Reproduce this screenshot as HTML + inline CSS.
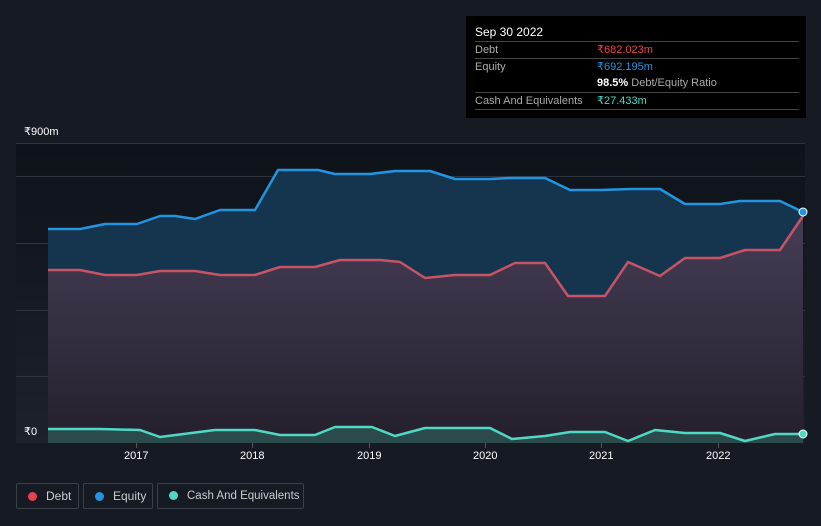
<!DOCTYPE html><html><head><style>
html,body{margin:0;width:821px;height:526px;overflow:hidden}
body{background:#151a23;font-family:"Liberation Sans",sans-serif;position:relative}
.tt{position:absolute;left:466px;top:16px;width:340px;height:102px;background:#000;color:#fff;font-size:11px}
.tt .h{position:absolute;left:9px;top:9px;font-size:12px}
.row{position:absolute;left:9px;width:324px;border-top:1px solid #444;height:17px;line-height:17px;color:#aaa}
.row span{position:absolute;left:122px}
.leg{position:absolute;top:483px;height:26px;border:1px solid #3a3f48;border-radius:2px;color:#ccc;font-size:12px;line-height:24px;box-sizing:border-box;white-space:nowrap}
.leg i{display:inline-block;width:9px;height:9px;border-radius:50%;margin:0 9px 0 11px;vertical-align:-1px}
.ax{position:absolute;color:#fff;font-size:11px}
</style></head><body>
<svg width="821" height="526" style="position:absolute;left:0;top:0">
<defs><linearGradient id="pg" x1="0" y1="0" x2="0" y2="1"><stop offset="0" stop-color="#0e1219"/><stop offset="1" stop-color="#1c212b"/></linearGradient>
<linearGradient id="dg" x1="0" y1="0" x2="0" y2="1"><stop offset="0" stop-color="#463d55"/><stop offset="1" stop-color="#241f2c"/></linearGradient></defs>
<rect x="16" y="143" width="789" height="300" fill="url(#pg)"/>
<g stroke="#2e333d" stroke-width="1"><line x1="16" y1="143.5" x2="805" y2="143.5"/><line x1="16" y1="176.5" x2="805" y2="176.5"/><line x1="16" y1="243.5" x2="805" y2="243.5"/><line x1="16" y1="310.5" x2="805" y2="310.5"/><line x1="16" y1="376.5" x2="805" y2="376.5"/></g>
<path d="M48,229 L80,229 L105,224 L137,224 L160,216 L175,216 L195,219 L220,210 L255,210 L278,170 L318,170 L335,174 L370,174 L395,171 L430,171 L455,179 L490,179 L510,178 L545,178 L570,190 L600,190 L630,189 L660,189 L685,204 L720,204 L740,201 L780,201 L803,212 L803,443 L48,443Z" fill="#15354f"/>
<path d="M48,270 L80,270 L105,275 L137,275 L160,271 L195,271 L220,275 L255,275 L280,267 L315,267 L340,260 L380,260 L400,262 L425,278 L455,275 L490,275 L515,263 L545,263 L568,296 L605,296 L628,262 L660,276 L685,258 L720,258 L745,250 L780,250 L803,216 L803,443 L48,443Z" fill="url(#dg)"/>
<path d="M48,429 L100,429 L140,430 L160,437 L215,430 L255,430 L280,435 L315,435 L335,427 L372,427 L395,436 L425,428 L490,428 L512,439 L545,436 L570,432 L605,432 L628,441 L655,430 L685,433 L720,433 L745,441 L775,434 L803,434 L803,443 L48,443Z" fill="#2a4a4c"/>
<g fill="none" stroke-width="2.5" stroke-linejoin="round">
<path d="M48,229 L80,229 L105,224 L137,224 L160,216 L175,216 L195,219 L220,210 L255,210 L278,170 L318,170 L335,174 L370,174 L395,171 L430,171 L455,179 L490,179 L510,178 L545,178 L570,190 L600,190 L630,189 L660,189 L685,204 L720,204 L740,201 L780,201 L803,212" stroke="#2394df"/>
<path d="M48,270 L80,270 L105,275 L137,275 L160,271 L195,271 L220,275 L255,275 L280,267 L315,267 L340,260 L380,260 L400,262 L425,278 L455,275 L490,275 L515,263 L545,263 L568,296 L605,296 L628,262 L660,276 L685,258 L720,258 L745,250 L780,250 L803,216" stroke="#c65466"/>
<path d="M48,429 L100,429 L140,430 L160,437 L215,430 L255,430 L280,435 L315,435 L335,427 L372,427 L395,436 L425,428 L490,428 L512,439 L545,436 L570,432 L605,432 L628,441 L655,430 L685,433 L720,433 L745,441 L775,434 L803,434" stroke="#4fd8c4"/></g>
<circle cx="803" cy="212" r="4" fill="#2394df" stroke="#fff" stroke-width="1"/>
<circle cx="803" cy="434" r="4" fill="#4fd8c4" stroke="#fff" stroke-width="1"/>
<g stroke="#555" ><line x1="136.5" y1="443" x2="136.5" y2="448"/><line x1="252.5" y1="443" x2="252.5" y2="448"/><line x1="369.5" y1="443" x2="369.5" y2="448"/><line x1="485.5" y1="443" x2="485.5" y2="448"/><line x1="601.5" y1="443" x2="601.5" y2="448"/><line x1="718.5" y1="443" x2="718.5" y2="448"/></g>
</svg>
<div class="ax" style="left:24px;top:125px">₹900m</div>
<div class="ax" style="left:24px;top:425px">₹0</div>
<div class="ax" style="left:124px;top:450px">2017</div>
<div class="ax" style="left:240px;top:450px">2018</div>
<div class="ax" style="left:357px;top:450px">2019</div>
<div class="ax" style="left:473px;top:450px">2020</div>
<div class="ax" style="left:589px;top:450px">2021</div>
<div class="ax" style="left:706px;top:450px">2022</div>
<div class="tt"><div class="h">Sep 30 2022</div>
<div class="row" style="top:25px">Debt<span style="color:#e8424f">₹682.023m</span></div>
<div class="row" style="top:42px">Equity<span style="color:#2394df">₹692.195m</span></div>
<div class="row" style="top:59px;border-top:none"><span style="color:#aaa"><b style="color:#fff;font-weight:bold">98.5%</b> Debt/Equity Ratio</span></div>
<div class="row" style="top:76px">Cash And Equivalents<span style="color:#4fd8c4">₹27.433m</span></div>
<div class="row" style="top:93px;height:0"></div></div>
<div class="leg" style="left:16px;width:63px"><i style="background:#e8424f"></i>Debt</div>
<div class="leg" style="left:83px;width:70px"><i style="background:#2394df"></i>Equity</div>
<div class="leg" style="left:157px;width:147px;font-size:11.5px"><i style="background:#4fd8c4"></i>Cash And Equivalents</div>
</body></html>
